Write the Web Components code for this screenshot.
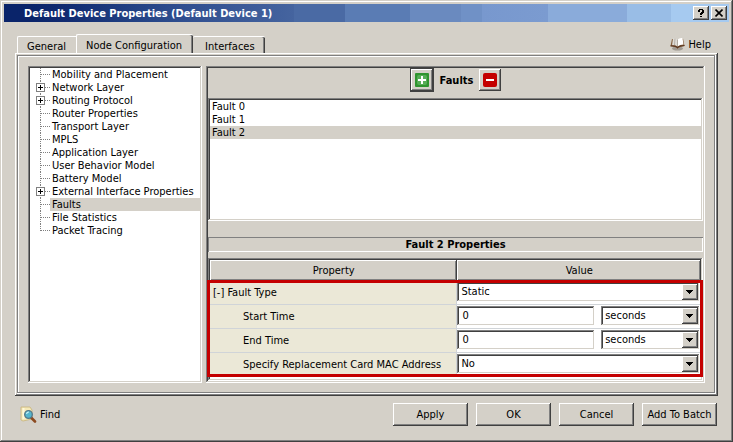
<!DOCTYPE html>
<html lang="en">
<head>
<meta charset="utf-8">
<title>Default Device Properties</title>
<style>
  :root {
    --face: #d4d0c8;
    --light: #ffffff;
    --shadow: #808080;
    --dark: #404040;
    --sunken: inset -1px -1px #fff, inset 1px 1px #808080, inset -2px -2px #d4d0c8, inset 2px 2px #404040;
    --raised: inset -1px -1px #404040, inset 1px 1px #fff, inset -2px -2px #808080;
  }
  body {
    margin: 0;
    background: var(--face);
    color: #000;
    font: 11px/13px "DejaVu Sans Condensed", "DejaVu Sans", Tahoma, sans-serif;
  }
</style>
</head>
<body>
<dialog-window>
  <title-bar slot="title">Default Device Properties (Default Device 1)</title-bar>
  <tab-strip slot="tabs">
    <tab-item>General</tab-item>
    <tab-item selected>Node Configuration</tab-item>
    <tab-item>Interfaces</tab-item>
  </tab-strip>
  <icon-link slot="help" icon="book">Help</icon-link>

  <nav-tree slot="nav">
    <tree-item>Mobility and Placement</tree-item>
    <tree-item branch>Network Layer</tree-item>
    <tree-item branch>Routing Protocol</tree-item>
    <tree-item>Router Properties</tree-item>
    <tree-item>Transport Layer</tree-item>
    <tree-item>MPLS</tree-item>
    <tree-item>Application Layer</tree-item>
    <tree-item>User Behavior Model</tree-item>
    <tree-item>Battery Model</tree-item>
    <tree-item branch>External Interface Properties</tree-item>
    <tree-item selected>Faults</tree-item>
    <tree-item>File Statistics</tree-item>
    <tree-item last>Packet Tracing</tree-item>
  </nav-tree>

  <fault-editor slot="content">
    <tool-button slot="tools" kind="add"></tool-button>
    <b slot="tools">Faults</b>
    <tool-button slot="tools" kind="remove"></tool-button>
    <fault-item slot="faults">Fault 0</fault-item>
    <fault-item slot="faults">Fault 1</fault-item>
    <fault-item slot="faults" selected>Fault 2</fault-item>
    <b slot="heading">Fault 2 Properties</b>
    <property-grid slot="grid"></property-grid>
  </fault-editor>

  <icon-link slot="find" icon="find">Find</icon-link>
  <push-button slot="actions">Apply</push-button>
  <push-button slot="actions">OK</push-button>
  <push-button slot="actions">Cancel</push-button>
  <push-button slot="actions">Add To Batch</push-button>
</dialog-window>

<script>
const define = (name, html, setup) => {
  const template = document.createElement('template');
  template.innerHTML = html;
  customElements.define(name, class extends HTMLElement {
    constructor() {
      super();
      this.attachShadow({ mode: 'open' }).append(template.content.cloneNode(true));
    }
    connectedCallback() {
      if (setup) setup(this, this.shadowRoot);
    }
  });
};

define('dialog-window', `
<style>
  :host {
    display: flex; flex-direction: column; box-sizing: border-box; min-height: 100vh;
    padding: 4px; background: var(--face);
    box-shadow: inset -1px -1px var(--dark), inset 1px 1px var(--face), inset -2px -2px var(--shadow), inset 2px 2px var(--light);
  }
  .top { display: flex; justify-content: space-between; align-items: flex-end; margin-top: 12px; padding: 0 4px 0 13px; }
  .help { padding: 0 14px 2px 0; }
  .panel {
    flex: 1; display: flex; margin: 0 11px; padding: 13px;
    box-shadow: inset -1px -1px var(--dark), inset 1px 1px var(--light), inset -2px -2px var(--shadow),
      inset 2px 2px var(--face), inset -3px -3px var(--light), inset 3px 3px var(--shadow),
      inset -4px -4px var(--shadow), inset 4px 4px var(--light);
    gap: 4px;
  }
  .nav { flex: 0 0 174px; display: flex; }
  .content { flex: 1; min-width: 0; display: flex; }
  ::slotted([slot=nav]), ::slotted([slot=content]) { flex: 1; min-width: 0; }
  footer { display: flex; justify-content: space-between; align-items: center; padding: 7px 12px 12px 16px; }
  .actions { display: flex; gap: 8px; }
</style>
<slot name="title"></slot>
<div class="top"><slot name="tabs"></slot><div class="help"><slot name="help"></slot></div></div>
<main class="panel"><div class="nav"><slot name="nav"></slot></div><div class="content"><slot name="content"></slot></div></main>
<footer><slot name="find"></slot><div class="actions"><slot name="actions"></slot></div></footer>
`);

define('title-bar', `
<style>
  :host {
    display: flex; align-items: center; justify-content: space-between; height: 18px; padding: 0 2px 0 20px;
    color: #fff; font-weight: bold;
    background: linear-gradient(90deg, #0a246a 4%, #122c72 9%, #203f82 17%, #304f90 25%, #45649f 40%,
      #4a6aa4 40%, #4a6aa4 47%, #5a7cb4 47%, #5a7cb4 56%, #6a8abf 56%, #6a8abf 63%,
      #7091c6 63%, #7091c6 66%, #7898ce 66%, #7b9bd0 75%, #8aabda 75%, #8aabda 86%,
      #99bde6 86%, #99bde6 92%, #a6caf0 92%);
  }
  div { display: flex; gap: 2px; }
  button { display: grid; place-items: center; width: 16px; height: 14px; padding: 0; border: 0; background: var(--face); box-shadow: var(--raised); color: #000; }
</style>
<span><slot></slot></span>
<div>
  <button type="button" aria-label="Help"><svg width="8" height="10" viewBox="0 0 8 10" shape-rendering="crispEdges"><path d="M2 1h4v1h1v3h-1v1h-1v1h-2v-2h1v-1h1v-2h-2v2h-2v-2h1zM3 8h2v1h-2z"/></svg></button>
  <button type="button" aria-label="Close"><svg width="8" height="8" viewBox="0 0 8 8" stroke="#000" stroke-width="1.6"><path d="M.5 .5l7 7M7.5 .5l-7 7"/></svg></button>
</div>
`);

define('tab-strip', `
<style>:host { display: flex; align-items: flex-end; }</style>
<slot></slot>
`);

define('tab-item', `
<style>
  :host { display: block; }
  button {
    display: block; box-sizing: border-box; height: 17px; padding: 2px 10px 0 9px; border: 0; margin: 0;
    border-top: 1px solid var(--light); border-left: 1px solid var(--light); border-top-left-radius: 2px;
    background: var(--face); font: inherit; white-space: nowrap; color: inherit;
  }
  :host(:last-child) button {
    border-left: 0; padding-left: 12px; border-top-right-radius: 2px;
    box-shadow: inset -1px 0 var(--dark), inset -2px 0 var(--shadow);
  }
  :host([selected]) button {
    height: 19px; padding: 3px 11px 0 9px; border-top-right-radius: 2px;
    box-shadow: inset -1px 0 var(--dark), inset -2px 0 var(--shadow);
  }
</style>
<button type="button"><slot></slot></button>
`);

const ICONS = {
  book: `<svg width="15" height="14" viewBox="0 0 15 14">
    <ellipse cx="7.5" cy="11.5" rx="5.5" ry="2" fill="#7d776e" opacity=".6"/>
    <path d="M.5 9L2 2l5.500 1L13 1.500 14.500 9 8.500 10.500 7.500 12l-1-1.500z" fill="#84603f"/>
    <path d="M2 8.500L3 1.500Q5.500 .5 7.500 2.500V9.500Q5 7.500 2 8.500z" fill="#dedbd6"/>
    <path d="M7.500 2.500Q9.500 .5 12.500 1L13.500 7.500Q10 7.500 7.500 9.500z" fill="#fff"/>
    <path d="M7.500 2.500v7M5 1.500L4.500 8" stroke="#a8a299" stroke-width=".8"/>
    <path d="M.5 9Q5 8.500 7.500 10.500 10 8.500 14.500 8.500" fill="none" stroke="#5a3520" stroke-width="1.200"/></svg>`,
  find: `<svg width="17" height="17" viewBox="0 0 17 17">
    <path d="M1 1h9l2 3v9l-9 2-2-1z" fill="#f4e8b8" stroke="#c6b278" stroke-width=".8"/>
    <path d="M2.500 2h2v11h-2z" fill="#fff8da"/>
    <path d="M11 11.500l4 4" stroke="#8c4a20" stroke-width="2.600" stroke-linecap="round"/>
    <circle cx="8.500" cy="8.500" r="3.800" fill="#55b6cd" stroke="#527789" stroke-width="1.300"/>
    <path d="M6.500 8a2.500 2.500 0 0 1 2.500-2" fill="none" stroke="#c8f2f8" stroke-width="1.200"/></svg>`
};

define('icon-link', `
<style>
  :host { display: block; }
  a { display: flex; align-items: center; gap: 3px; color: inherit; text-decoration: none; }
  .icon { display: flex; }
</style>
<a href="#"><span class="icon"></span><slot></slot></a>
`, (host, root) => { root.querySelector('.icon').innerHTML = ICONS[host.getAttribute('icon')]; });

define('nav-tree', `
<style>
  :host { display: block; padding: 2px 2px 2px 8px; background: #fff; box-shadow: var(--sunken); }
</style>
<div role="tree"><slot></slot></div>
`);

define('tree-item', `
<style>
  :host { display: flex; height: 13px; }
  svg { flex: none; }
  .line { stroke: #808080; stroke-dasharray: 1 1; }
  .box { display: none; }
  :host([branch]) .box { display: inline; }
  .tail { stroke: #808080; stroke-dasharray: 1 1; }
  :host([last]) .tail { display: none; }
  span { flex: 1; padding-left: 2px; white-space: nowrap; }
  :host([selected]) span { background: var(--face); }
</style>
<svg width="14" height="13" viewBox="0 0 14 13" fill="none" shape-rendering="crispEdges">
  <path class="line" d="M4.500 0V7M5 6.500H14"/><path class="tail" d="M4.500 8V13"/>
  <g class="box"><path d="M.5 2.500h8v8h-8z" fill="#fff" stroke="#808080"/><path d="M2 6.500h5M4.500 4v5" stroke="#000"/></g>
</svg>
<span role="treeitem"><slot></slot></span>
`);

define('fault-editor', `
<style>
  :host { display: flex; flex-direction: column; box-sizing: border-box; padding: 2px; background: var(--face); box-shadow: var(--sunken); }
  .tools { display: flex; justify-content: center; align-items: center; gap: 6px; height: 24px; }
  .faults { flex: 1; margin-top: 6px; min-height: 64px; padding: 2px; background: #fff; box-shadow: var(--sunken); }
  h2 {
    margin: 16px 0 6px; padding: 1px; font: inherit; text-align: center;
    box-shadow: inset 1px 1px var(--shadow), inset -1px -1px var(--light);
  }
</style>
<div class="tools"><slot name="tools"></slot></div>
<div class="faults" role="listbox" aria-label="Faults"><slot name="faults"></slot></div>
<h2><slot name="heading"></slot></h2>
<slot name="grid"></slot>
`);

define('fault-item', `
<style>
  :host { display: block; padding-left: 2px; }
  :host([selected]) { background: var(--face); }
</style>
<div role="option"><slot></slot></div>
`);

define('tool-button', `
<style>
  :host { display: block; }
  button { display: grid; place-items: center; width: 22px; height: 22px; padding: 0; border: 0; background: var(--face); box-shadow: var(--raised); }
  :host([kind=add]) button { width: 24px; height: 24px; border: 1px solid var(--dark); }
  :host([kind=add]) .minus, :host([kind=remove]) .plus { display: none; }
</style>
<button type="button">
  <svg class="plus" width="14" height="14" viewBox="0 0 14 14"><rect width="14" height="14" rx="1" fill="#2f942f"/><rect x="2" y="2" width="10" height="10" rx="2" fill="#56ad56"/><path d="M7 3v8M3 7h8" stroke="#fff" stroke-width="2"/></svg>
  <svg class="minus" width="14" height="14" viewBox="0 0 14 14"><rect width="14" height="14" rx="2" fill="#c40000"/><path d="M3 7h8" stroke="#fff" stroke-width="2"/></svg>
</button>
`, (host, root) => root.querySelector('button').setAttribute('aria-label', host.getAttribute('kind') === 'add' ? 'Add fault' : 'Remove fault'));

define('push-button', `
<style>
  :host { display: block; }
  button { display: block; width: 75px; height: 23px; padding: 0; border: 0; background: var(--face); box-shadow: var(--raised); font: inherit; color: inherit; white-space: nowrap; }
</style>
<button type="button"><slot></slot></button>
`);

define('property-grid', `
<style>
  :host { display: block; position: relative; padding: 2px 2px 4px; background: #fff; box-shadow: var(--sunken); }
  table { width: 100%; border-collapse: separate; border-spacing: 0; table-layout: fixed; }
  .name { width: 50.4%; }
  th, td { padding: 0; text-align: left; font-weight: normal; }
  thead th { height: 21px; text-align: center; background: var(--face); box-shadow: var(--raised); }
  tbody th { height: 23px; }
  tbody td { height: 21px; padding-bottom: 2px; }
  tbody th, tbody td { border-bottom: 1px solid #d0d4d8; }
  tbody th { padding-left: 33px; background: #ebe8d7; border-right: 1px solid #d0d4d8; white-space: nowrap; }
  tbody tr:first-child th { padding-left: 3px; }
  tbody tr:last-child th, tbody tr:last-child td { border-bottom-color: #fff; }
  td > div { padding-right: 2px; }
  .pair { display: grid; grid-template-columns: minmax(0, 137fr) minmax(0, 98fr); gap: 7px; }
  input, select {
    box-sizing: border-box; width: 100%; height: 19px; margin: 0; padding: 2px 4px; border: 0; border-radius: 0;
    background: #fff; box-shadow: inset 1px 1px var(--shadow), inset -1px -1px var(--face), inset 2px 2px var(--dark);
    font: inherit; color: inherit; appearance: none; outline: 0;
  }
  input { padding-left: 5px; }
  .combo { display: grid; align-items: center; }
  .combo > * { grid-area: 1 / 1; }
  .combo svg { justify-self: end; margin-right: 1px; pointer-events: none; background: var(--face); box-shadow: var(--raised); }
  .mark { position: absolute; inset: 22px 0 4px -1px; border: 3px solid #c40000; pointer-events: none; }
</style>
<table>
  <colgroup><col class="name"><col></colgroup>
  <thead><tr><th scope="col">Property</th><th scope="col">Value</th></tr></thead>
  <tbody>
    <tr><th scope="row"><label for="type">[-] Fault Type</label></th>
      <td><div><span class="combo"><select id="type"><option>Static</option></select></span></div></td></tr>
    <tr><th scope="row"><label for="start">Start Time</label></th>
      <td><div class="pair"><input id="start" type="text" value="0"><span class="combo"><select aria-label="Start Time unit"><option>seconds</option></select></span></div></td></tr>
    <tr><th scope="row"><label for="end">End Time</label></th>
      <td><div class="pair"><input id="end" type="text" value="0"><span class="combo"><select aria-label="End Time unit"><option>seconds</option></select></span></div></td></tr>
    <tr><th scope="row"><label for="mac">Specify Replacement Card MAC Address</label></th>
      <td><div><span class="combo"><select id="mac"><option>No</option></select></span></div></td></tr>
  </tbody>
</table>
<div class="mark"></div>
`, (host, root) => {
  for (const combo of root.querySelectorAll('.combo')) {
    combo.insertAdjacentHTML('beforeend', '<svg width="16" height="16" viewBox="0 0 16 16" shape-rendering="crispEdges"><path d="M4 6h7v1h-1v1h-1v1h-1v1h-1v-1h-1v-1h-1v-1h-1z"/></svg>');
  }
});
</script>
</body>
</html>
